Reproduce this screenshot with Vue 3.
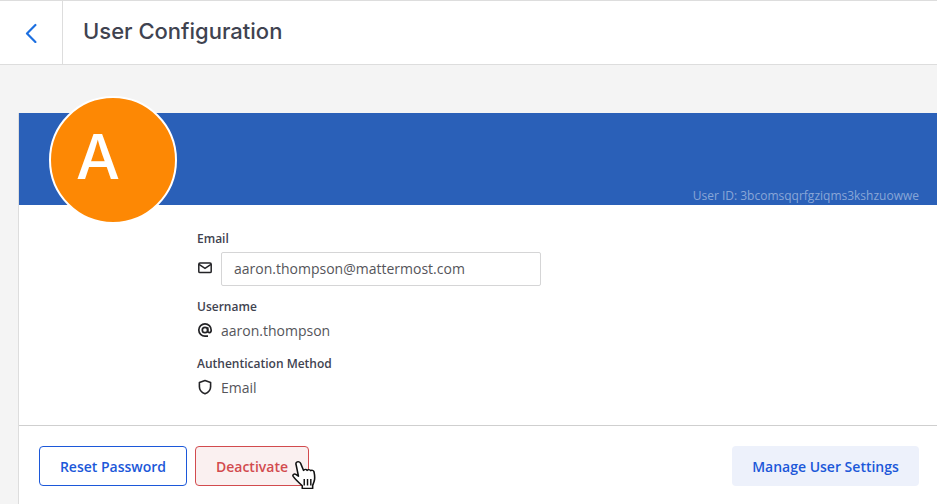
<script setup>
const fields = [
  { label: 'Username', value: 'aaron.thompson', icon: 'at' },
  { label: 'Authentication Method', value: 'Email', icon: 'shield' },
]
</script>

<template>
  <div class="page">
    <header class="topbar">
      <div class="back">
        <svg width="14" height="20" viewBox="0 0 14 20" fill="none">
          <path d="M11.400 2 3 10.500l8.400 8.500" stroke="#1c6fe0" stroke-width="2.200" stroke-linecap="round" stroke-linejoin="round" />
        </svg>
      </div>
      <h1 class="title">User Configuration</h1>
    </header>

    <main class="content">
      <section class="card">
        <div class="banner">
          <div class="avatar">A</div>
          <span class="user-id">User ID: 3bcomsqqrfgziqms3kshzuowwe</span>
        </div>

        <div class="details">
          <div class="label">Email</div>
          <div class="row email-row">
            <svg class="icon" width="16" height="16" viewBox="0 0 16 16" fill="none">
              <rect x="1.800" y="3" width="12.400" height="9.600" rx="1.200" stroke="#232326" stroke-width="1.500" />
              <path d="M2 4.400 8 8.300l6-3.900" stroke="#232326" stroke-width="1.500" />
            </svg>
            <div class="input">aaron.thompson@mattermost.com</div>
          </div>

          <template v-for="f in fields" :key="f.label">
            <div class="label">{{ f.label }}</div>
            <div class="row">
              <svg v-if="f.icon === 'at'" class="icon" width="16" height="16" viewBox="0 0 16 16" fill="none">
                <circle cx="8" cy="8" r="2.700" stroke="#232326" stroke-width="1.700" />
                <path d="M10.700 5.300v3.600c0 2.300 3.500 2.300 3.500-.7C14.200 4.600 11.400 1.800 8 1.800S1.800 4.600 1.800 8s2.800 6.200 6.200 6.200h3" stroke="#232326" stroke-width="1.700" />
              </svg>
              <svg v-else class="icon" width="16" height="16" viewBox="0 0 16 16" fill="none">
                <path d="M8 1.500 13.600 3.500v4.300c0 3.400-2.400 5.800-5.600 7-3.200-1.200-5.600-3.600-5.600-7V3.500Z" stroke="#232326" stroke-width="1.600" stroke-linejoin="round" />
              </svg>
              <span class="value">{{ f.value }}</span>
            </div>
          </template>
        </div>

        <footer class="actions">
          <button class="btn outline">Reset Password</button>
          <button class="btn danger">Deactivate</button>
          <button class="btn soft">Manage User Settings</button>
          <svg class="cursor" width="25" height="28" viewBox="1.500 1 19 24" preserveAspectRatio="none">
            <path d="M5.500 1.800c1.200-.5 2.200.2 2.600 1.300l2.200 6c.4-1.200 2.200-1.200 2.700 0 .5-1 2.200-1 2.700.2.700-.7 2.200-.4 2.500.9.500 2.600.9 5.300.2 8l-1.200 3.800v2.500H9.300v-2.300c-2.500-2.500-5-5.100-6.900-8-.7-1.200.6-2.600 2-1.700l2 1.500L4.600 4.200c-.3-1 0-2 .9-2.400Z" fill="#fff" stroke="#111" stroke-width="1.200" stroke-linejoin="round" />
            <path d="M10.800 16.500v5.500M13.300 16.500v5.500M15.800 16.500v5.500" stroke="#111" stroke-width="1.100" fill="none" />
          </svg>
        </footer>
      </section>
    </main>
  </div>
</template>

<style scoped>
.page {
  width: 937px;
  height: 504px;
  overflow: hidden;
  display: flex;
  flex-direction: column;
  background: #f4f4f4;
  font-family: "Open Sans", "Liberation Sans", sans-serif;
  color: #3d3c40;
}
.topbar {
  height: 65px;
  box-sizing: border-box;
  flex: none;
  display: flex;
  align-items: stretch;
  background: #fff;
  border-top: 1px solid #dddddd;
  border-bottom: 1px solid #dddddd;
}
.back {
  width: 63px;
  box-sizing: border-box;
  border-right: 1px solid #dddddd;
  display: flex;
  align-items: center;
  justify-content: center;
  padding-right: 1px;
}
.title {
  margin: 0 0 3px 20px;
  align-self: center;
  font-family: "Inter", "Open Sans", sans-serif;
  font-size: 22px;
  font-weight: 500;
  color: #3f4350;
}
.content {
  flex: 1;
  padding: 48px 0 0 18px;
  min-height: 0;
}
.card {
  background: #fff;
  border-left: 1px solid #dddddd;
  height: 391px;
  display: flex;
  flex-direction: column;
}
.banner {
  position: relative;
  height: 92px;
  flex: none;
  background: #2a60b8;
}
.avatar {
  position: absolute;
  left: 30px;
  top: -17px;
  width: 128px;
  height: 128px;
  box-sizing: border-box;
  border: 2px solid #fff;
  border-radius: 50%;
  background: #fd8804;
  color: #fff;
  font-family: "Inter", sans-serif;
  font-size: 62px;
  font-weight: 500;
  display: flex;
  align-items: center;
  justify-content: center;
  padding-bottom: 7px;
  padding-right: 30px;
}
.user-id {
  position: absolute;
  right: 18px;
  bottom: 1px;
  font-size: 12px;
  line-height: 16px;
  color: rgba(255, 255, 255, 0.45);
}
.details {
  flex: 1;
  padding: 26px 0 0 178px;
}
.label {
  font-size: 12px;
  line-height: 16px;
  font-weight: 600;
  color: #3f4350;
  margin-bottom: 4px;
}
.row {
  display: flex;
  align-items: center;
  height: 24px;
  margin-bottom: 13px;
  font-size: 14px;
}
.email-row {
  height: 34px;
  margin-top: 5px;
}
.icon {
  flex: none;
  margin-right: 8px;
  margin-top: -2px;
}
.email-row .icon { margin-top: -3px; }
.input {
  width: 320px;
  height: 34px;
  box-sizing: border-box;
  border: 1px solid #d5d5d6;
  border-radius: 2px;
  padding-left: 12px;
  line-height: 32px;
  color: #55555a;
}
.value {
  color: #55555a;
  margin-top: -2px;
}
.actions {
  position: relative;
  flex: none;
  height: 79px;
  box-sizing: border-box;
  border-top: 1px solid #cfcfcf;
  padding: 20px 18px 0 20px;
  display: flex;
  align-items: flex-start;
  gap: 8px;
}
.btn {
  height: 40px;
  box-sizing: border-box;
  border-radius: 4px;
  font-family: "Open Sans", sans-serif;
  font-size: 14px;
  font-weight: 600;
  padding: 0;
}
.outline {
  width: 148px;
  background: #fff;
  border: 1px solid #1c58d9;
  color: #1c58d9;
}
.danger {
  width: 114px;
  background: #faf0f0;
  border: 1px solid #d24b4e;
  color: #d24b4e;
}
.soft {
  width: 187px;
  margin-left: auto;
  background: #edf1fb;
  border: 0;
  color: #1c58d9;
}
.cursor {
  position: absolute;
  left: 273px;
  top: 35px;
}
</style>
